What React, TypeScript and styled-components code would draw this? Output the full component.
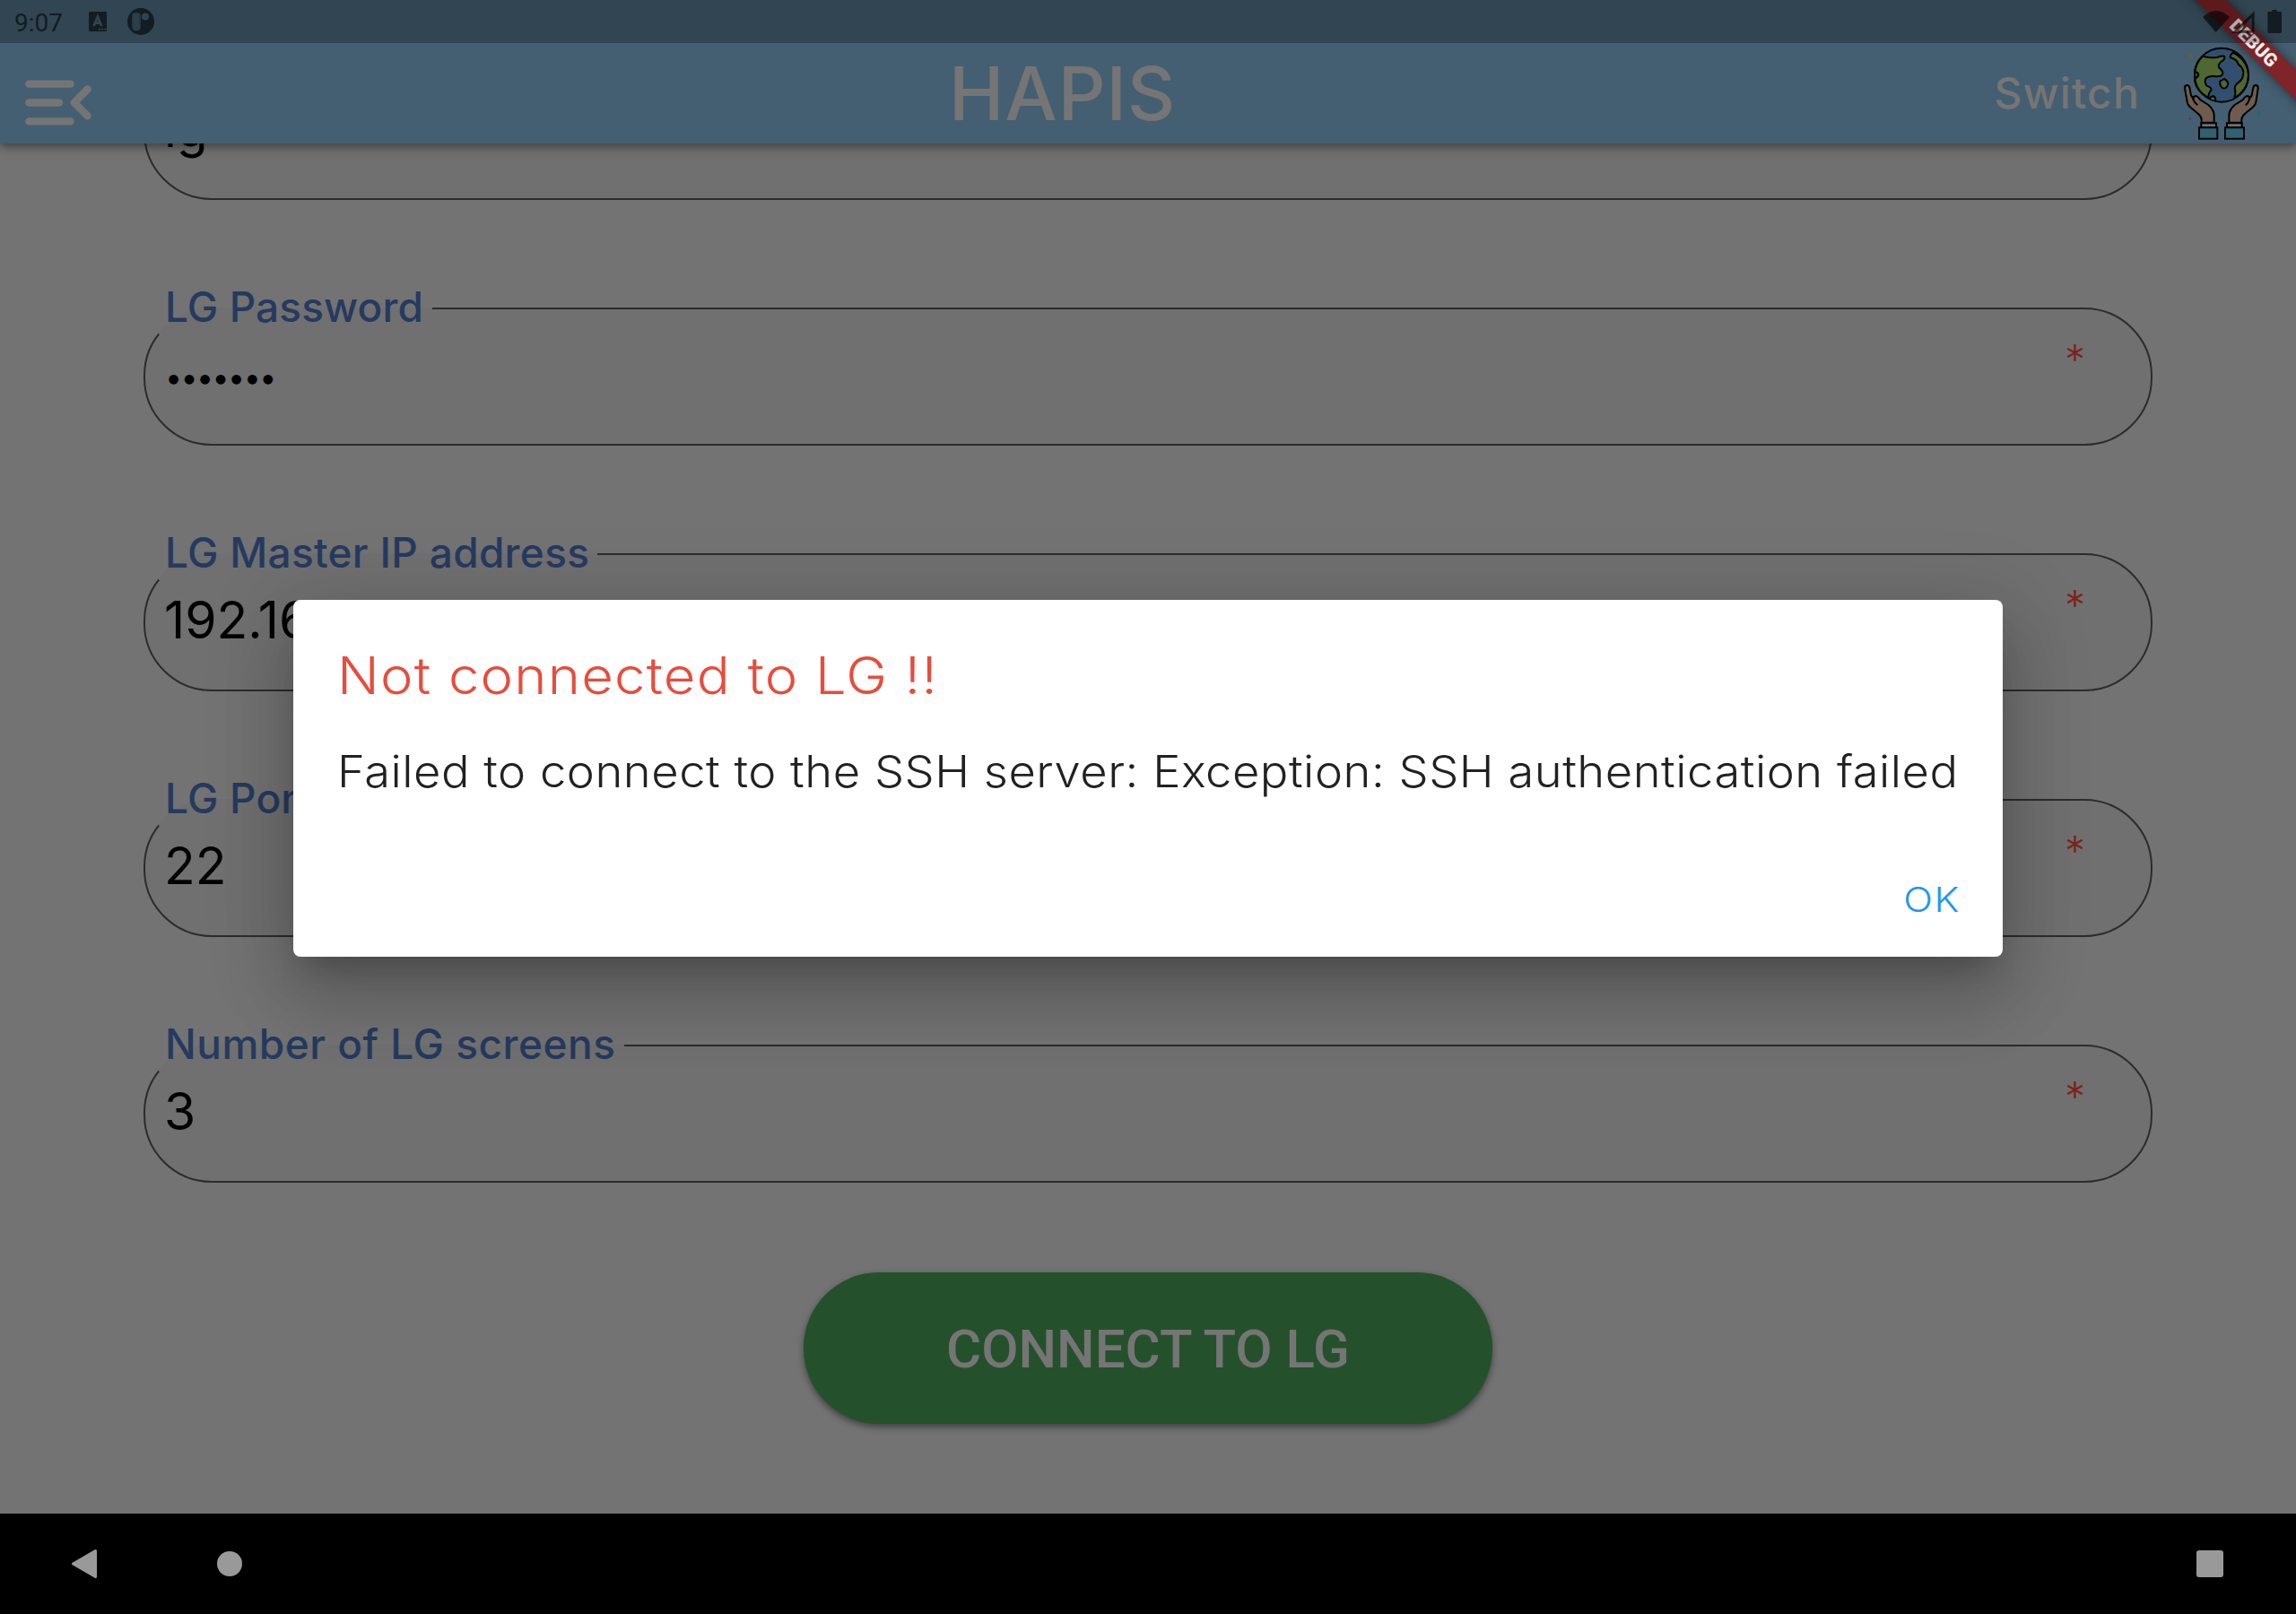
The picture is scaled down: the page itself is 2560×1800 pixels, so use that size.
import React from 'react';
import styled, { createGlobalStyle } from 'styled-components';

const GlobalStyle = createGlobalStyle`
  *, *::before, *::after { box-sizing: border-box; }
  body { margin: 0; background: #000; }
  svg { display: block; flex: none; }
`;

const Screen = styled.div`
  position: relative;
  display: flex;
  flex-direction: column;
  width: 2560px;
  height: 1800px;
  overflow: hidden;
  background: #737373;
  font-family: Inter, 'Open Sans', sans-serif;
`;

const Header = styled.header`
  position: relative;
  z-index: 1;
  flex: none;
  height: 160px;
  background: #445f71;
  box-shadow: 0 4px 8px rgba(0, 0, 0, 0.3), 0 2px 16px rgba(0, 0, 0, 0.18);
`;

const StatusBar = styled.div`
  position: relative;
  z-index: 2;
  display: flex;
  justify-content: space-between;
  height: 48px;
  padding: 0 13px 0 16px;
  background: rgba(0, 0, 0, 0.27);
`;

const StatusLeft = styled.div`
  display: flex;
  align-items: center;
`;

const Clock = styled.span`
  width: 83px;
  padding-top: 3px;
  font: 400 28px/44px Roboto, sans-serif;
  color: #131c22;
`;

const AppBar = styled.div`
  display: grid;
  grid-template-columns: 1030px auto 1fr;
  height: 112px;
  padding: 0 36px 0 28px;
`;

const MenuButton = styled.div`
  padding-top: 41px;
`;

const AppTitle = styled.h1`
  margin: 0;
  font-size: 82.5px;
  font-weight: 500;
  letter-spacing: 0.9px;
  line-height: 113px;
  color: #757575;
`;

const Actions = styled.div`
  display: flex;
  justify-content: flex-end;
  padding-top: 2px;
`;

const SwitchLabel = styled.span`
  margin-right: 46px;
  font-size: 48px;
  font-weight: 500;
  letter-spacing: 1.2px;
  line-height: 108px;
  color: #757575;
`;

const RibbonCorner = styled.div`
  position: absolute;
  z-index: 1;
  top: 0;
  right: 0;
  width: 190px;
  height: 160px;
  overflow: hidden;
`;

const Ribbon = styled.div`
  position: absolute;
  top: 35.5px;
  left: 42.5px;
  width: 200px;
  height: 24px;
  transform: rotate(45deg);
  background: #7f2429;
  box-shadow: 0 0 12px rgba(0, 0, 0, 0.5);
  font: 900 20.5px/24px Roboto, sans-serif;
  text-align: center;
  color: #efefef;
`;

const Form = styled.main`
  flex: 1;
  min-height: 0;
  display: flex;
  flex-direction: column;
  justify-content: flex-end;
  align-items: center;
  gap: 92px;
  padding: 0 160px 100px;
  overflow: hidden;
`;

const Field = styled.fieldset`
  flex: none;
  display: flex;
  justify-content: space-between;
  width: 2240px;
  height: 182px;
  margin: 0;
  padding: 0 73px 0 15px;
  border: 2px solid #2c2c2c;
  border-radius: 76px;
  background: #707070;
`;

const Legend = styled.legend<{ $gap: number; $spacing: number }>`
  width: ${(p) => p.$gap}px;
  height: 58px;
  padding: 0 0 0 7px;
  font-size: 46px;
  font-weight: 500;
  letter-spacing: ${(p) => p.$spacing}px;
  line-height: 54px;
  white-space: nowrap;
  color: #263a5f;
`;

const Value = styled.span<{ $masked?: boolean }>`
  padding: ${(p) => (p.$masked ? '18px 0 0 7px' : '15px 0 0 6px')};
  font-size: ${(p) => (p.$masked ? 34 : 57)}px;
  font-weight: 400;
  line-height: 60px;
  letter-spacing: ${(p) => (p.$masked ? -1.6 : 0)}px;
  color: #000;
`;

const Required = styled.span`
  padding-top: 4px;
  font-size: 46px;
  font-weight: 300;
  line-height: 48px;
  color: #7c231d;
`;

const ConnectButton = styled.button`
  flex: none;
  width: 768px;
  height: 169px;
  margin-top: 8px;
  padding: 3px 0 0;
  border: 0;
  border-radius: 84px;
  background: #24512b;
  box-shadow: 0 4px 6px rgba(0, 0, 0, 0.3), 0 2px 10px rgba(0, 0, 0, 0.15);
  font: 500 60px/1 Roboto, sans-serif;
  color: #757575;
`;

const NavBar = styled.nav`
  flex: none;
  display: flex;
  align-items: center;
  height: 112px;
  padding: 0 81px 0 80px;
  background: #000;
`;

const HomeDot = styled.span`
  width: 28px;
  height: 28px;
  margin-left: 134px;
  border-radius: 50%;
  background: #999;
`;

const RecentsSquare = styled.span`
  width: 30px;
  height: 30px;
  margin-left: auto;
  border-radius: 3px;
  background: #999;
`;

const Overlay = styled.div`
  position: absolute;
  inset: 0;
  z-index: 3;
  display: flex;
  justify-content: center;
  align-items: flex-start;
  padding-top: 669px;
`;

const Dialog = styled.section`
  display: flex;
  flex-direction: column;
  width: 1906px;
  height: 398px;
  padding: 48px 47px 0 49px;
  border-radius: 8px;
  background: #fff;
  box-shadow: 0 22px 30px -14px rgba(0, 0, 0, 0.2),
    0 48px 76px 6px rgba(0, 0, 0, 0.14), 0 18px 92px 16px rgba(0, 0, 0, 0.12);
`;

const DialogTitle = styled.h2`
  align-self: flex-start;
  margin: 0;
  transform: scaleX(1.08);
  transform-origin: left;
  font-size: 57px;
  font-weight: 300;
  letter-spacing: 1.15px;
  line-height: 74px;
  color: #e74c3c;
`;

const DialogText = styled.p`
  align-self: flex-start;
  margin: 38px 0 0;
  transform: scaleX(1.07);
  transform-origin: left;
  font-size: 49px;
  font-weight: 300;
  letter-spacing: 0.5px;
  line-height: 64px;
  white-space: nowrap;
  color: #212121;
`;

const DialogAction = styled.button`
  align-self: flex-end;
  margin: 82px 0 0;
  padding: 0;
  border: 0;
  background: none;
  transform: scaleX(1.12);
  transform-origin: right;
  font: 300 38.5px/56px Inter, sans-serif;
  letter-spacing: 1.5px;
  color: #2196f3;
`;

const StatusIconsLeft = () => (
  <svg width="75" height="32" viewBox="0 0 75 32">
    <rect x="0" y="5" width="20" height="22" rx="1" fill="#131c22" />
    <path d="M5.6 21 L9.9 10.5 L14.2 21 M7.4 17.6 H12.4" fill="none" stroke="#2f4453" strokeWidth="2.7" />
    <path d="M11 24.6h2m1.200 0h2m1.200 0h2" stroke="#2f4453" strokeWidth="1.800" />
    <circle cx="58" cy="16" r="15" fill="#131c22" />
    <rect x="49" y="7" width="8" height="18.500" rx="3.400" fill="none" stroke="#2f4453" strokeWidth="1.300" />
    <rect x="49.500" y="7.500" width="7" height="17.500" rx="3" fill="#2b3f4c" />
    <circle cx="63" cy="10.500" r="4" fill="#2f4453" />
  </svg>
);

const StatusIconsRight = () => (
  <svg width="92" height="48" viewBox="165 0 276 144" fill="rgba(0,0,0,.62)">
    <path d="M168 57 Q212 15 258 57 L212 108Z" />
    <path fillRule="evenodd" d="M341 37 V110 H265Z M332 59 V101 H288Z" />
    <path d="M400 33h17v6h11q4 0 4 4v64q0 4-4 4h-39q-4 0-4-4v-64q0-4 4-4h11z" fill="#131c22" />
  </svg>
);

const MenuIcon = () => (
  <svg width="75" height="51" viewBox="84 266 225 153" fill="none" stroke="#757575" strokeWidth="25" strokeLinecap="round" strokeLinejoin="round">
    <path d="M97 280H236M97 342.500H198M97 405H236" />
    <path d="M293 297.500L248.500 342.500L293 387" />
  </svg>
);

const GlobeHandsIcon = () => (
  <svg width="92" height="107" viewBox="96 149 276 321" stroke="#000" strokeWidth="6" strokeLinejoin="round" strokeLinecap="round">
    <circle cx="231" cy="250" r="90" fill="#324f6f" stroke="none" />
    <g fill="#4f6831">
      <path d="M168 187 Q195 194 216 191 Q243 182 241 192 Q241 200 229 206 Q218 214 223 226 Q236 236 235 246 Q231 257 207 254 Q188 252 179 261 Q172 272 181 286 Q199 292 196 301 Q187 309 187 326 Q142 300 141 263 Q152 258 154 249 Q151 239 141 240 Q145 207 168 187Z" />
      <path d="M269 175 Q260 182 260 191 Q283 198 287 214 Q303 226 304 240 Q305 265 286 276 Q270 288 277 304 Q278 315 274 326 Q320 300 321 250 Q318 200 269 175Z" />
      <path d="M226 271 Q234 267 240 263 Q250 267 253 279 Q250 294 238 295 Q224 290 226 271Z" />
      <path d="M191 329 Q195 321 205 321 Q213 326 210 335" />
    </g>
    <circle cx="231" cy="250" r="90" fill="none" />
    <g fill="#6f5c50">
      <path d="M164 409 Q167 390 151 378 L128 359 Q116 350 115 334 L108 294 Q107 285 115 284 Q122 284 124 292 L129 318 L137 331 Q134 321 145 320 Q151 321 160 333 L187 350 Q207 368 206 387 V409Z" />
      <path d="M134 324 Q138 341 149 349" fill="none" />
      <path d="M298 409 Q295 390 311 378 L334 359 Q346 350 347 334 L353 294 Q354 285 346 284 Q339 284 337 292 L332 318 L323 331 Q326 321 317 320 Q311 321 302 333 L275 350 Q255 368 256 387 V409Z" />
      <path d="M325 324 Q323 341 313 349" fill="none" />
    </g>
    <g strokeLinejoin="miter">
      <path d="M163 411H213V426H163Z M249 411H299V426H249Z" fill="#6d7073" />
      <path d="M156 426H217V463H156Z M243 426H306V463H243Z" fill="#2f6272" />
    </g>
    <g stroke="none">
      <path d="M127 176l3 7 7 3-7 3-3 7-3-7-7-3 7-3z" fill="#715d2c" />
      <path d="M355 369l3 7 7 3-7 3-3 7-3-7-7-3 7-3z" fill="#2c6376" />
      <path d="M126 391l2 4 4 2-4 2-2 4-2-4-4-2 4-2z" fill="#7a2f3a" />
      <circle cx="165" cy="162" r="3" fill="#3c6a31" />
      <circle cx="325" cy="402" r="3" fill="#715d2c" />
    </g>
  </svg>
);

const BackIcon = () => (
  <svg width="28" height="34" viewBox="0 0 28 34">
    <path d="M1.500 17 L26.500 2.500 V31.500Z" fill="#999" stroke="#999" strokeWidth="3" strokeLinejoin="round" />
  </svg>
);

interface FieldData {
  label: string;
  value: string;
  gap: number;
  spacing: number;
  masked?: boolean;
}

const fields: FieldData[] = [
  { label: '', value: 'lg', gap: 300, spacing: 0 },
  { label: 'LG Password', value: '•••••••', gap: 305, spacing: 0.1, masked: true },
  { label: 'LG Master IP address', value: '192.16', gap: 489, spacing: 0.3 },
  { label: 'LG Port', value: '22', gap: 190, spacing: 0.2 },
  { label: 'Number of LG screens', value: '3', gap: 519, spacing: 0.5 },
];

export default function App() {
  return (
    <>
      <GlobalStyle />
      <Screen>
        <Header>
          <StatusBar>
            <StatusLeft>
              <Clock>9:07</Clock>
              <StatusIconsLeft />
            </StatusLeft>
            <StatusIconsRight />
          </StatusBar>
          <AppBar>
            <MenuButton><MenuIcon /></MenuButton>
            <AppTitle>HAPIS</AppTitle>
            <Actions>
              <SwitchLabel>Switch</SwitchLabel>
              <GlobeHandsIcon />
            </Actions>
          </AppBar>
          <RibbonCorner><Ribbon>DEBUG</Ribbon></RibbonCorner>
        </Header>
        <Form>
          {fields.map((f) => (
            <Field key={f.label}>
              <Legend $gap={f.gap} $spacing={f.spacing}>{f.label}</Legend>
              <Value $masked={f.masked}>{f.value}</Value>
              {f.label && <Required>*</Required>}
            </Field>
          ))}
          <ConnectButton>CONNECT TO LG</ConnectButton>
        </Form>
        <NavBar>
          <BackIcon />
          <HomeDot />
          <RecentsSquare />
        </NavBar>
        <Overlay>
          <Dialog>
            <DialogTitle>Not connected to LG !!</DialogTitle>
            <DialogText>Failed to connect to the SSH server: Exception: SSH authentication failed</DialogText>
            <DialogAction>OK</DialogAction>
          </Dialog>
        </Overlay>
      </Screen>
    </>
  );
}
